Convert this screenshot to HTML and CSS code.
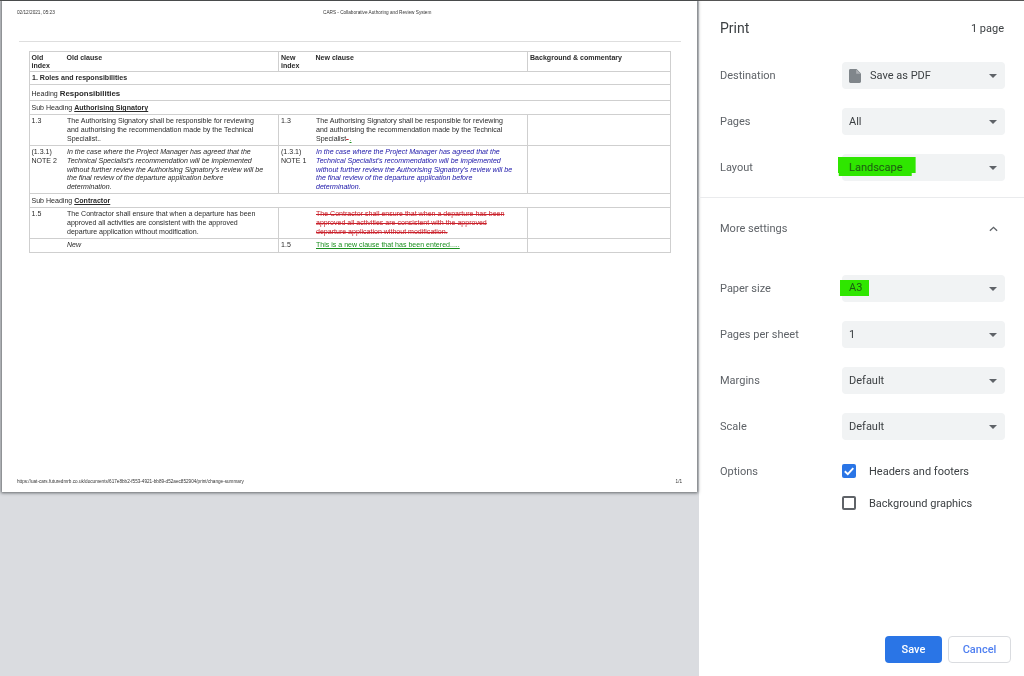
FILE: index.html
```html
<!DOCTYPE html>
<html lang="en">
<head>
<meta charset="utf-8">
<title>Print</title>
<link rel="stylesheet" href="styles.css">
</head>
<body>
<div class="app">
  <main class="preview">
    <div class="paper">
      <div class="page-head">
        <span class="head-date">02/12/2021, 05:23</span>
        <span class="head-title">CARS - Collaborative Authoring and Review System</span>
      </div>
      <div class="rule"></div>
      <table class="doc">
        <colgroup><col class="c1"><col class="c2"><col class="c3"><col class="c4"><col class="c5"></colgroup>
        <tr class="r-head">
          <th class="idx">Old index</th><th class="clause th-clause">Old clause</th>
          <th class="idx">New index</th><th class="clause th-clause">New clause</th>
          <th class="th-bg">Background &amp; commentary</th>
        </tr>
        <tr class="r-sec"><td colspan="5" class="sec">1. Roles and responsibilities</td></tr>
        <tr class="r-h"><td colspan="5" class="wide">Heading <b class="h-big">Responsibilities</b></td></tr>
        <tr class="r-sub"><td colspan="5" class="wide">Sub Heading <b class="h-sub">Authorising Signatory</b></td></tr>
        <tr class="r-3">
          <td class="idx">1.3</td>
          <td class="clause">The Authorising Signatory shall be responsible for reviewing and authorising the recommendation made by the Technical Specialist..</td>
          <td class="idx">1.3</td>
          <td class="clause">The Authorising Signatory shall be responsible for reviewing and authorising the recommendation made by the Technical Specialist<span class="del">-</span><span class="ins ins-end">.</span></td>
          <td></td>
        </tr>
        <tr class="r-5">
          <td class="idx">(1.3.1) NOTE 2</td>
          <td class="clause note">In the case where the Project Manager has agreed that the Technical Specialist's recommendation will be implemented without further review the Authorising Signatory's review will be the final review of the departure application before determination.</td>
          <td class="idx">(1.3.1) NOTE 1</td>
          <td class="clause note moved">In the case where the Project Manager has agreed that the Technical Specialist's recommendation will be implemented without further review the Authorising Signatory's review will be the final review of the departure application before determination.</td>
          <td></td>
        </tr>
        <tr class="r-sub"><td colspan="5" class="wide">Sub Heading <b class="h-sub">Contractor</b></td></tr>
        <tr class="r-3">
          <td class="idx">1.5</td>
          <td class="clause">The Contractor shall ensure that when a departure has been approved all activities are consistent with the approved departure application without modification.</td>
          <td class="idx"></td>
          <td class="clause"><span class="del">The Contractor shall ensure that when a departure has been approved all activities are consistent with the approved departure application without modification.</span></td>
          <td></td>
        </tr>
        <tr class="r-new">
          <td class="idx"></td>
          <td class="clause note">New</td>
          <td class="idx">1.5</td>
          <td class="clause"><span class="ins">This is a new clause that has been entered.....</span></td>
          <td></td>
        </tr>
      </table>
      <div class="page-foot">
        <span>https://uat-cars.futuredmrb.co.uk/documents/617e8bb2-f553-4921-bb89-d52aec852904/print/change-summary</span>
        <span>1/1</span>
      </div>
    </div>
  </main>

  <aside class="panel">
    <header class="panel-head">
      <h1 class="panel-title">Print</h1>
      <span class="panel-count">1 page</span>
    </header>

    <section class="group">
      <div class="row">
        <span class="label">Destination</span>
        <div class="select">
          <svg class="file-icon" viewBox="0 0 12 14" aria-hidden="true"><path d="M1.4 0H7.6L12 4.4V12.6C12 13.4 11.4 14 10.6 14H1.4C.6 14 0 13.4 0 12.6V1.4C0 .6.6 0 1.4 0Z" fill="#80868b"/><path d="M7.2 .6V4.8H11.4" fill="#aeb1b5"/></svg>
          <span class="value">Save as PDF</span>
          <span class="caret"></span>
        </div>
      </div>
      <div class="row">
        <span class="label">Pages</span>
        <div class="select"><span class="value">All</span><span class="caret"></span></div>
      </div>
      <div class="row">
        <span class="label">Layout</span>
        <div class="select"><span class="value mark mark-wide">Landscape</span><span class="caret"></span></div>
      </div>
    </section>

    <div class="more">
      <span class="label">More settings</span>
      <svg class="chev" viewBox="0 0 10 6" aria-hidden="true"><path d="M1 5L5 1.2L9 5" fill="none" stroke="#5f6368" stroke-width="1.5"/></svg>
    </div>

    <section class="group group-more">
      <div class="row">
        <span class="label">Paper size</span>
        <div class="select"><span class="value mark mark-small">A3</span><span class="caret"></span></div>
      </div>
      <div class="row">
        <span class="label">Pages per sheet</span>
        <div class="select"><span class="value">1</span><span class="caret"></span></div>
      </div>
      <div class="row">
        <span class="label">Margins</span>
        <div class="select"><span class="value">Default</span><span class="caret"></span></div>
      </div>
      <div class="row">
        <span class="label">Scale</span>
        <div class="select"><span class="value">Default</span><span class="caret"></span></div>
      </div>
      <div class="options">
        <span class="label">Options</span>
        <div class="checks">
          <div class="check">
            <span class="box box-on"><svg viewBox="0 0 14 14" aria-hidden="true"><path d="M2.8 7.2L5.8 10.1L11.3 4.2" fill="none" stroke="#fff" stroke-width="1.9"/></svg></span>
            <span class="check-text">Headers and footers</span>
          </div>
          <div class="check">
            <span class="box"></span>
            <span class="check-text">Background graphics</span>
          </div>
        </div>
      </div>
    </section>

    <footer class="actions">
      <button class="btn btn-save" type="button">Save</button>
      <button class="btn btn-cancel" type="button">Cancel</button>
    </footer>
  </aside>
</div>
</body>
</html>
```

FILE: styles.css
```css
* { box-sizing: border-box; }
html, body { margin: 0; height: 100%; }
body { font-family: Roboto, "Liberation Sans", sans-serif; background: #fff; overflow: hidden; }

.app { display: flex; height: 676px; width: 1024px; border-top: 1px solid #555; }

/* preview */
.preview { width: 699px; flex: none; background: #dadce0; padding: 0 2px; }
.paper {
  width: 695px; height: 491px; background: #fff;
  box-shadow: 0 0 3px 1px rgba(60, 64, 67, .75);
  display: flex; flex-direction: column;
  padding: 0 15px;
  font-family: "Liberation Sans", Arial, sans-serif;
  color: #2a2a2a;
}
.page-head { height: 40px; padding-top: 9px; font-size: 4.7px; line-height: 5px; display: flex; color: #333; filter: blur(.25px); }
.head-date { width: 306px; }
.head-title { flex: none; }
.rule { height: 1px; background: #dedede; margin: 0 0 0 2px; width: 662px; }
.doc {
  border-collapse: collapse; table-layout: fixed;
  width: 642px; margin: 9px 0 0 12px;
  font-size: 7.05px; line-height: 8.8px;
  filter: blur(.25px);
}
.c1 { width: 35px; } .c2 { width: 214px; } .c3 { width: 35px; } .c4 { width: 214px; } .c5 { width: 143px; }
.doc th, .doc td { border-top: 1px solid #cfcfcf; border-bottom: 1px solid #cfcfcf; padding: 0; vertical-align: top; text-align: left; }
.doc tr > :first-child { border-left: 1px solid #cfcfcf; padding-left: 1.5px; }
.doc tr > :last-child { border-right: 1px solid #cfcfcf; }
.doc tr > :nth-child(3) { border-left: 1px solid #cfcfcf; padding-left: 2px; }
.doc tr > :nth-child(5) { border-left: 1px solid #cfcfcf; }
.doc th { font-weight: 700; padding-top: 2px; line-height: 8px; }
.doc th.idx { padding-right: 10px; }
.doc td.idx { padding-top: 2px; padding-right: 4px; }
.doc td.clause { padding: 2px 13px 0 2.5px; }
.doc th.th-clause { padding-left: 2px; }
.doc th.th-bg { padding-left: 2px; }
.r-head { height: 20px; } .r-sec { height: 13px; } .r-h { height: 16px; } .r-sub { height: 14px; }
.r-3 { height: 31px; } .r-5 { height: 48px; } .r-new { height: 14px; }
.doc td.sec { font-weight: 700; padding: 2px 0 0 2px; }
.doc td.wide { padding-top: 3px; padding-left: 1.5px; }
.r-h .wide { line-height: 11px; }
.h-big { font-size: 7.9px; }
.h-sub { text-decoration: underline; }
.note { font-style: italic; }
.moved { color: #1a14a8; }
.del { color: #c9202a; text-decoration: line-through; }
.ins { color: #1a8f1e; text-decoration: underline; }
.ins-end { margin-left: 1px; }
.page-foot { margin-top: auto; display: flex; justify-content: space-between; font-size: 4.65px; line-height: 5px; padding-bottom: 8px; color: #333; filter: blur(.25px); }

/* settings panel */
.panel { flex: 1; display: flex; flex-direction: column; padding-top: 19px; color: #5f6368; font-size: 11px; filter: blur(.2px); }
.panel-head { display: flex; justify-content: space-between; align-items: center; height: 16px; padding: 0 20px 0 21px; }
.panel-title { margin: 0; font-size: 14px; font-weight: 400; color: #3c4043; }
.panel-count { font-size: 11px; color: #3c4043; }
.group { display: flex; flex-direction: column; gap: 19px; padding: 26px 19px 16px 21px; border-bottom: 1px solid #eaebed; }
.group-more { border-bottom: 0; padding-top: 16px; }
.row { display: flex; justify-content: space-between; align-items: center; height: 27px; }
.label { font-size: 11px; color: #5f6368; }
.select { width: 163px; height: 27px; background: #f1f3f4; border-radius: 4px; display: flex; align-items: center; padding: 0 8px 0 7px; }
.value { color: #3c4043; }
.caret { margin-left: auto; width: 0; height: 0; border-left: 4px solid transparent; border-right: 4px solid transparent; border-top: 4px solid #5f6368; }
.file-icon { width: 12px; height: 14px; margin-right: 9px; flex: none; }
.mark { background: #2fe600; color: #1c5c12; }
.mark-wide { padding: 4px 13px 2px 11px; margin: 0 0 2px -11px; clip-path: polygon(0 0, 100% 0, 100% 84%, 95% 84%, 95% 100%, 1% 100%, 1% 84%, 0 84%); }
.mark-small { padding: 1px 7px 2px 9px; margin: 0 0 1px -9px; }
.more { display: flex; justify-content: space-between; align-items: center; height: 61px; padding: 0 26px 0 21px; }
.chev { width: 9px; height: 6px; }
.options { display: flex; margin-top: 4px; }
.options > .label { width: 122px; padding-top: 2px; }
.checks { display: flex; flex-direction: column; gap: 18px; padding-top: 1px; }
.check { display: flex; align-items: center; height: 14px; }
.box { width: 14px; height: 14px; border: 2px solid #5f6368; border-radius: 2px; margin-right: 13px; flex: none; display: block; }
.box svg { display: block; }
.box-on { background: #2a75e6; border: 0; }
.check-text { color: #3c4043; }
.actions { margin-top: auto; display: flex; justify-content: flex-end; gap: 6px; padding: 0 13px 13px 0; }
.btn { height: 27px; border-radius: 4px; font: 500 11px Roboto, sans-serif; padding: 0; }
.btn-save { width: 57px; background: #2a75e6; border: 0; color: #fff; }
.btn-cancel { width: 63px; background: #fff; border: 1px solid #dadce0; color: #4f7ff0; }
```
